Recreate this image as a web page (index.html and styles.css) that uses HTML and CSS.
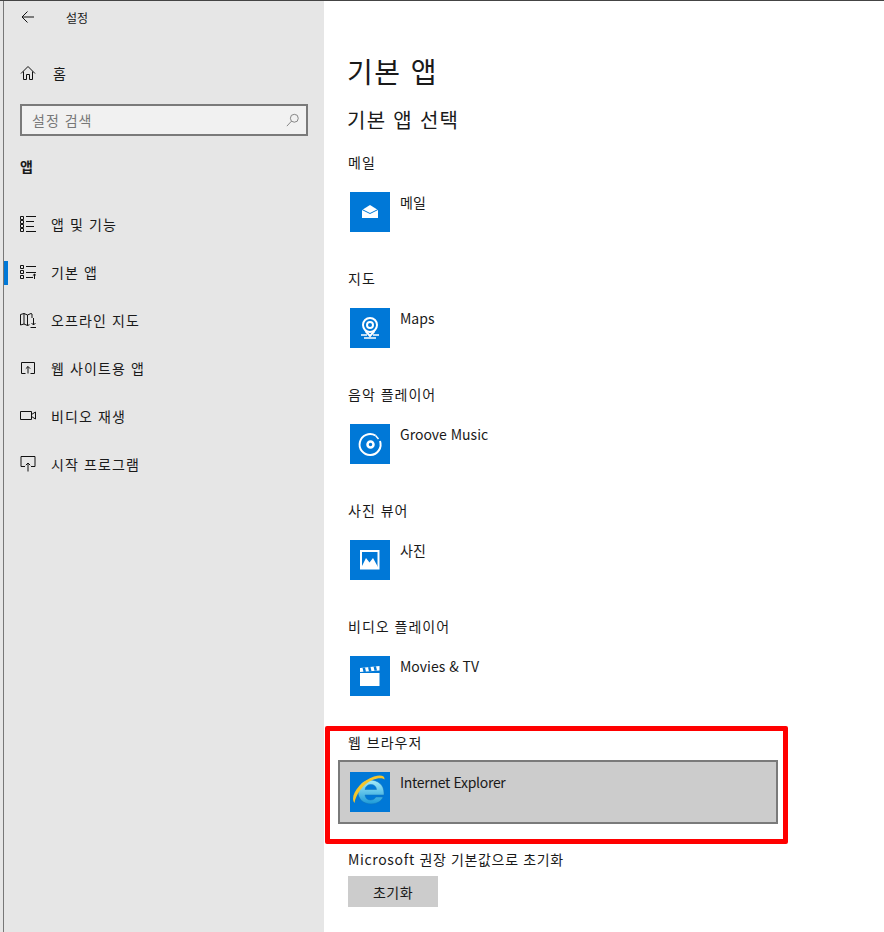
FILE: index.html
```html
<!DOCTYPE html>
<html lang="ko">
<head>
  <meta charset="UTF-8" />
  <title>설정</title>
  <link rel="stylesheet" href="styles.css">
</head>
<body>
  <div class="window">
    <aside class="sidebar">
      <div class="title-row">
        <svg class="icon" viewBox="0 0 16 16"><path d="M14 8H2.500M7.500 2.500 2 8l5.500 5.500"/></svg>
        <span class="title-text">설정</span>
      </div>
      <div class="home-row">
        <svg class="icon" viewBox="0 0 16 16"><path d="M1 8.500 8 1.500l7 7M3.500 6.500v8h3v-5h3v5h3v-8"/></svg>
        <span>홈</span>
      </div>
      <div class="search">
        <span>설정 검색</span>
        <svg class="search-icon" viewBox="0 0 16 16"><circle cx="9.500" cy="6" r="4.500"/><path d="M6.300 9.300 1 15"/></svg>
      </div>
      <div class="section-title">앱</div>
      <nav class="nav">
        <div class="nav-item">
          <svg class="icon" viewBox="0 0 16 16"><path d="M.5.500h3v3h-3zM.5 4.500h3v3h-3zM.5 8.500h3v3h-3zM.5 12.500h3v3h-3zM6 .5h10M6 5.500h8M6 10.500h8M6 15.500h10"/></svg>
          <span>앱 및 기능</span>
        </div>
        <div class="nav-item active">
          <svg class="icon" viewBox="0 0 16 16"><path d="M.5 1.500h3v3h-3zM.5 6.500h3v3h-3zM.5 11.500h3v3h-3zM6 2.500h10M6 8.500h10M6 13.500h7M14.500 15V10M12.800 11.700l1.700-1.700 1.700 1.700"/></svg>
          <span>기본 앱</span>
        </div>
        <div class="nav-item">
          <svg class="icon" viewBox="0 0 16 16"><path d="M.5 2.500l3.500-1 3.500 1.500L11 1.500l1 .5v4M.5 2.500v10.500L4 12l3.500 1.500 2-.8M4 1.500V12M7.500 3v10.500M13.500 6v7M11.500 11l2 2 2-2M10.500 15.500H16"/></svg>
          <span>오프라인 지도</span>
        </div>
        <div class="nav-item">
          <svg class="icon" viewBox="0 0 16 16"><path d="M5.500 13.500h-4v-11h13v11h-4M8 13.500V6.500M5.800 8.700 8 6.500l2.200 2.200"/></svg>
          <span>웹 사이트용 앱</span>
        </div>
        <div class="nav-item">
          <svg class="icon" viewBox="0 0 16 16"><path d="M.5 3.500h11v8H.5zM11.500 6.500l4-2.500v7l-4-2.500"/></svg>
          <span>비디오 재생</span>
        </div>
        <div class="nav-item">
          <svg class="icon" viewBox="0 0 16 16"><path d="M5 10.500H1V.5h14v10h-4M8 15.500V7M5.800 9.200 8 7l2.200 2.200"/></svg>
          <span>시작 프로그램</span>
        </div>
      </nav>
    </aside>
    <main class="content">
      <h1 class="page-title">기본 앱</h1>
      <h2 class="sub-title">기본 앱 선택</h2>

      <section class="group">
        <div class="group-label">메일</div>
        <div class="app">
          <div class="tile">
            <svg viewBox="0 0 40 40"><path class="fill-w" d="M12 18l8-5 8 5v8H12z"/><path class="line-b" d="M12 17.500l8 4 8-4"/></svg>
          </div>
          <span class="app-name">메일</span>
        </div>
      </section>

      <section class="group">
        <div class="group-label">지도</div>
        <div class="app">
          <div class="tile">
            <svg viewBox="0 0 40 40"><circle class="line-w" cx="20" cy="17" r="7"/><circle class="line-w" cx="20" cy="17" r="3"/><path class="line-w" d="M15.500 23l4.500 5 4.500-5"/><path class="line-w thin" d="M11 27h6M23 27h6M14 30h12"/></svg>
          </div>
          <span class="app-name">Maps</span>
        </div>
      </section>

      <section class="group">
        <div class="group-label">음악 플레이어</div>
        <div class="app">
          <div class="tile">
            <svg viewBox="0 0 40 40"><path class="line-w" d="M25.500 11.500A10.500 10.500 0 1 0 30 17"/><circle class="line-w thick" cx="20.500" cy="20.500" r="3"/><path class="line-w thin" d="M25.500 11.500 28.500 15"/></svg>
          </div>
          <span class="app-name">Groove Music</span>
        </div>
      </section>

      <section class="group">
        <div class="group-label">사진 뷰어</div>
        <div class="app">
          <div class="tile">
            <svg viewBox="0 0 40 40"><rect class="line-w" x="11" y="11" width="17.500" height="17.500"/><path class="fill-w" d="M11 28l5-10 3.500 4.500 3.500-4.500 5.500 10z"/></svg>
          </div>
          <span class="app-name">사진</span>
        </div>
      </section>

      <section class="group">
        <div class="group-label">비디오 플레이어</div>
        <div class="app">
          <div class="tile">
            <svg viewBox="0 0 40 40"><path class="fill-w" d="M10 17h19.500v13H10z"/><path class="fill-w" d="M10 12l19.500-2v4.500L10 16z"/><path class="fill-b" d="M12.500 11.700l2.500-.3 1 4.300-2.500.2zM18 11.200l2.500-.3 1 4.300-2.500.2zM23.500 10.600l2.500-.3 1 4.300-2.500.2z"/></svg>
          </div>
          <span class="app-name">Movies &amp; TV</span>
        </div>
      </section>

      <section class="browser-box">
        <div class="group-label">웹 브라우저</div>
        <div class="app selected">
          <div class="tile">
            <svg viewBox="0 0 40 40">
              <defs>
                <linearGradient id="ieBlue" x1="0" y1="0" x2="0" y2="1"><stop offset="0" stop-color="#a5ecfa"/><stop offset="1" stop-color="#1b9ad8"/></linearGradient>
              </defs>
              <path class="ie-e" fill="url(#ieBlue)" d="M8 20C8 13 13 8 20 8c8 0 14 5 14 13v2H15c.3 3 2.500 5 5.500 5 2.500 0 4.300-1 5.300-3H33c-1.500 4-6 7-12 7C13.500 32 8 27 8 20zM15 17.500h11.500c-.2-3-2.300-5-5.700-5-3 0-5.400 2-5.800 5z"/>
              <path fill="#f5c52c" d="M4.500 31C-1 24 10 9 24 4.500c6.500-2 11-1 10.500 3-2.500-2-7-1.500-12 .5C13 12 6 22 4.500 31z"/>
            </svg>
          </div>
          <span class="app-name">Internet Explorer</span>
        </div>
      </section>

      <div class="reset-label">Microsoft 권장 기본값으로 초기화</div>
      <button class="reset-btn" type="button">초기화</button>
    </main>
  </div>
</body>
</html>
```

FILE: styles.css
```css
* {
  box-sizing: border-box;
}

body {
  margin: 0;
  height: 932px;
  overflow: hidden;
  border-top: 1px solid #444;
  background-color: #e6e6e6;
  font-family: "Noto Sans CJK KR", "Noto Sans", sans-serif;
  font-size: 14px;
  color: #1a1a1a;
}

.window {
  display: flex;
  height: 931px;
  margin-left: 3px;
  border-left: 1px solid #777;
  background-color: #fff;
}

.sidebar {
  flex: none;
  width: 320px;
  background-color: #e6e6e6;
  padding-left: 16px;
}

.icon {
  flex: none;
  width: 16px;
  height: 16px;
  fill: none;
  stroke: #111;
  stroke-width: 1;
}

.title-row {
  display: flex;
  align-items: center;
  height: 32px;
  font-size: 12px;
}

.title-text {
  margin-left: 30px;
}

.home-row {
  display: flex;
  align-items: center;
  gap: 17px;
  height: 48px;
  margin-top: 16px;
}

.search {
  display: flex;
  align-items: center;
  justify-content: space-between;
  width: 288px;
  height: 32px;
  margin-top: 7px;
  padding: 0 6px 0 10px;
  border: 2px solid #7a7a7a;
  background-color: #f1f1f1;
  color: #777;
  letter-spacing: 1px;
}

.search-icon {
  width: 14px;
  height: 14px;
  fill: none;
  stroke: #777;
  stroke-width: 1;
}

.section-title {
  margin-top: 18px;
  font-weight: 700;
  line-height: 24px;
}

.nav {
  margin-top: 22px;
  margin-left: -16px;
}

.nav-item {
  display: flex;
  align-items: center;
  gap: 15px;
  height: 48px;
  padding-left: 16px;
  letter-spacing: 1.100px;
}

.nav-item.active {
  position: relative;
}

.nav-item.active::before {
  content: "";
  position: absolute;
  left: 0;
  top: 13px;
  width: 4px;
  height: 24px;
  background-color: #0078d7;
}

.content {
  flex: 1;
  min-width: 0;
  padding-left: 24px;
}

.page-title {
  margin: 0 0 0 -1px;
  padding-top: 50px;
  font-size: 28px;
  font-weight: 400;
  line-height: 40px;
  letter-spacing: 1.500px;
}

.sub-title {
  margin: 14px 0 0 -1px;
  font-size: 20px;
  font-weight: 400;
  line-height: 30px;
  letter-spacing: 1.300px;
}

.group {
  height: 116px;
}

.group:first-of-type {
  margin-top: 16px;
}

.group-label {
  line-height: 22px;
  letter-spacing: 1px;
}

.app {
  display: flex;
  align-items: flex-start;
  gap: 10px;
  margin-top: 19px;
}

.tile {
  flex: none;
  width: 40px;
  height: 40px;
  margin-left: 2px;
  background-color: #0078d7;
}

.tile svg {
  display: block;
  width: 40px;
  height: 40px;
}

.app-name {
  margin-top: -1px;
  line-height: 22px;
}

.fill-w {
  fill: #fff;
}

.fill-b {
  fill: #0078d7;
}

.line-w {
  fill: none;
  stroke: #fff;
  stroke-width: 2;
}

.line-w.thin {
  stroke-width: 1.500;
}

.line-w.thick {
  stroke-width: 2.500;
}

.line-b {
  fill: none;
  stroke: #0078d7;
  stroke-width: 1;
}

.ie-e {
  stroke: #1273b8;
  stroke-width: 0.500;
}

.browser-box {
  height: 118px;
  width: 463px;
  margin: -5px 0 0 -23px;
  padding: 0 0 0 18px;
  border: 5px solid #f00;
  border-radius: 2px;
}

.selected {
  width: 440px;
  height: 64px;
  margin: 7px 0 0 -10px;
  padding: 10px;
  border: 2px solid #7a7a7a;
  background-color: #ccc;
}

.selected .tile {
  margin-left: 0;
}

.selected .app-name {
  letter-spacing: -0.300px;
}

.reset-label {
  margin-top: 4px;
  line-height: 22px;
  letter-spacing: 0.650px;
}

.reset-btn {
  display: block;
  width: 90px;
  height: 31px;
  margin-top: 6px;
  border: none;
  background-color: #ccc;
  font-family: inherit;
  font-size: 14px;
  letter-spacing: 0.500px;
  color: #1a1a1a;
}
```
